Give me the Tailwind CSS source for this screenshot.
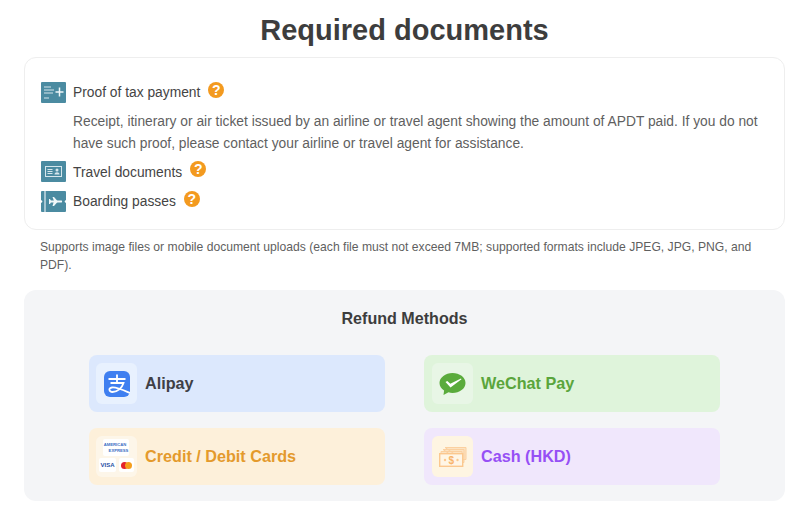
<!DOCTYPE html>
<html lang="en">
<head>
    <meta charset="UTF-8">
    <title>Required documents</title>
    <script src="https://cdn.jsdelivr.net/npm/@tailwindcss/browser@4"></script>
</head>
<body class="bg-white font-['Liberation_Sans',Arial,sans-serif] text-[#444444] overflow-hidden">
    <main class="w-[800px] h-[517px] pl-[24px] pr-[15px] pt-[12px]">
        <!-- Heading -->
        <h1 class="text-[29px] leading-[36px] font-bold text-center h-[45px] text-[#3d3d3d]">Required documents</h1>

        <!-- Documents card -->
        <section class="h-[173px] border border-[#eeeeee] rounded-[12px] pl-[16px] pr-[24px] pt-[23px]">
            <div class="flex items-center h-[22px]">
                <svg class="w-[25px] h-[21px] mr-[7px] shrink-0" viewBox="0 0 25 21">
                    <rect width="25" height="21" rx="1" fill="#4b8ba1"/>
                    <path d="M3 5h7M3 8h10M3 11h9M3 16h5" stroke="#d5e6ec" stroke-width="1.200" fill="none"/>
                    <path d="M18.500 5.500v9M14.500 10h8" stroke="#eef6f8" stroke-width="1.500" fill="none"/>
                </svg>
                <span class="text-[13.800px] leading-[22px] mt-[2px]">Proof of tax payment</span>
                <span class="ml-[8px] mb-[4px] w-[16px] h-[16px] rounded-full bg-[#f39a1f] text-white text-[14px] leading-[16px] font-bold text-center">?</span>
            </div>
            <p class="ml-[32px] mt-[8px] text-[13.800px] leading-[21.500px] text-[#5f5f5f]">Receipt, itinerary or air ticket issued by an airline or travel agent showing the amount of APDT paid. If you do not have such proof, please contact your airline or travel agent for assistance.</p>
            <div class="flex items-center h-[22px] mt-[7px]">
                <svg class="w-[25px] h-[21px] mr-[7px] mb-[1px] shrink-0" viewBox="0 0 25 21">
                    <rect width="25" height="21" rx="1" fill="#4b8ba1"/>
                    <rect x="4.500" y="5.500" width="16" height="10" fill="none" stroke="#d5e6ec"/>
                    <path d="M6.500 8.500h5M6.500 10.500h5M6.500 12.500h5" stroke="#d5e6ec" fill="none"/>
                    <circle cx="16" cy="9" r="1.500" fill="#d5e6ec"/>
                    <path d="M13.500 13.500c0-3 5-3 5 0z" fill="#d5e6ec"/>
                </svg>
                <span class="text-[13.800px] leading-[22px] mt-[2px]">Travel documents</span>
                <span class="ml-[8px] mb-[6px] w-[16px] h-[16px] rounded-full bg-[#f39a1f] text-white text-[14px] leading-[16px] font-bold text-center">?</span>
            </div>
            <div class="flex items-center h-[22px] mt-[7px]">
                <svg class="w-[25px] h-[21px] mr-[7px] shrink-0" viewBox="0 0 25 21">
                    <rect width="25" height="21" rx="1" fill="#4b8ba1"/>
                    <path d="M4 0v21" stroke="#e4eff3" stroke-width="1.200"/>
                    <circle cx="0" cy="10.500" r="1.300" fill="#fff"/>
                    <circle cx="25" cy="10.500" r="1.300" fill="#fff"/>
                    <path d="M8 9.500h12.500c.8 0 .8 2 0 2H8z" fill="#f2f8fa"/>
                    <path d="M11.500 6h1.500l3.500 4v1l-3.500 4h-1.500l1.500-5zM8 8h1l1 2v1l-1 2H8z" fill="#f2f8fa"/>
                </svg>
                <span class="text-[13.800px] leading-[22px] mt-[2px]">Boarding passes</span>
                <span class="ml-[8px] mb-[5px] w-[16px] h-[16px] rounded-full bg-[#f39a1f] text-white text-[14px] leading-[16px] font-bold text-center">?</span>
            </div>
        </section>

        <p class="mt-[8px] ml-[16px] mr-[24px] text-[12.150px] leading-[18px] text-[#5f5f5f]">Supports image files or mobile document uploads (each file must not exceed 7MB; supported formats include JPEG, JPG, PNG, and PDF).</p>

        <!-- Refund methods -->
        <section class="mt-[16px] h-[211px] bg-[#f4f5f7] rounded-[12px] pt-[18px]">
            <h2 class="text-[16.100px] leading-[20px] font-bold text-center text-[#3d3d3d]">Refund Methods</h2>
            <div class="grid grid-cols-[296px_296px] gap-x-[39px] gap-y-[16px] ml-[65px] mt-[27px]">
                <div class="h-[57px] rounded-[8px] bg-[#dce8fd] flex items-center pl-[7px]">
                    <div class="w-[41px] h-[41px] rounded-[6px] bg-[#e8f1fe] flex items-center justify-center mr-[8px]">
                        <svg class="w-[26px] h-[26px]" viewBox="0 0 26 26">
                            <rect width="26" height="26" rx="6" fill="#3f7ff0"/>
                            <path d="M4.500 8h17M13 3.500v8.500M6.500 12h13c-1.500 5-6 9-11 9-3.500 0-4.500-4-.5-4.500 4.500-.6 11 2.500 18 5.500" stroke="#fff" stroke-width="1.800" fill="none"/>
                        </svg>
                    </div>
                    <span class="text-[16.200px] font-bold text-[#3f3f46]">Alipay</span>
                </div>
                <div class="h-[57px] rounded-[8px] bg-[#dff4db] flex items-center pl-[8px]">
                    <div class="w-[41px] h-[41px] rounded-[6px] bg-[#e8f6e6] flex items-center justify-center mr-[8px]">
                        <svg class="w-[27px] h-[24px]" viewBox="0 0 27 24">
                            <path d="M13.500 1C6.500 1 .500 5.500.500 11c0 3 1.800 5.700 4.600 7.500L4.500 23l5-2.700c1.300.4 2.600.6 4 .6 7 0 13-4.400 13-10S20.500 1 13.500 1z" fill="#5aab3c"/>
                            <path d="M6.500 10l1.800-1 3 2.800L22 6.500l.5.8-11 8.200z" fill="#fff"/>
                        </svg>
                    </div>
                    <span class="text-[16.200px] font-bold text-[#5aa53c]">WeChat Pay</span>
                </div>
                <div class="h-[57px] rounded-[8px] bg-[#fdf0da] flex items-center pl-[7px]">
                    <div class="relative w-[41px] h-[41px] rounded-[6px] bg-[#fdf6e9] mr-[8px]">
                        <div class="absolute left-[7px] top-[3px] w-[26px] h-[17px] rounded-[2px] bg-white flex flex-col items-center justify-center text-[#3d6fc4] text-[4.200px] leading-[6px] font-bold">
                            <span class="-ml-[2px]">AMERICAN</span><span class="ml-[5px]">EXPRESS</span>
                        </div>
                        <div class="absolute left-[3px] top-[22px] w-[17px] h-[14px] rounded-[2px] bg-white text-[#2a4fa3] text-[6px] leading-[14px] font-bold text-center">VISA</div>
                        <div class="absolute left-[23px] top-[22px] w-[15px] h-[14px] rounded-[2px] bg-white flex items-center justify-center">
                            <span class="w-[7px] h-[7px] rounded-full bg-[#e3222b]"></span>
                            <span class="w-[7px] h-[7px] rounded-full bg-[#f59e1b] -ml-[3px]"></span>
                        </div>
                    </div>
                    <span class="text-[16.200px] font-bold text-[#e49a2c]">Credit / Debit Cards</span>
                </div>
                <div class="h-[57px] rounded-[8px] bg-[#f0e7fc] flex items-center pl-[8px]">
                    <div class="w-[41px] h-[41px] rounded-[6px] bg-[#fef5e2] flex items-center justify-center mr-[8px]">
                        <svg class="w-[28px] h-[20px]" viewBox="0 0 28 20">
                            <path d="M6 .500h21v12h-3.500zM4 2.500h21v13h-2zM2 4.500h21v2H2z" fill="#fce3c2" stroke="#fbd0a0"/>
                            <rect x=".7" y="6.700" width="23" height="12.600" fill="#fff6e6" stroke="#fbc88f" stroke-width="1.400"/>
                            <circle cx="6" cy="13" r="1.200" fill="#fbc88f"/>
                            <circle cx="18.500" cy="13" r="1.200" fill="#fbc88f"/>
                            <text x="12.200" y="16.500" font-size="10" font-weight="700" text-anchor="middle" fill="#f8b36a">$</text>
                        </svg>
                    </div>
                    <span class="text-[16.200px] font-bold text-[#9650f5]">Cash (HKD)</span>
                </div>
            </div>
        </section>
    </main>
</body>
</html>
